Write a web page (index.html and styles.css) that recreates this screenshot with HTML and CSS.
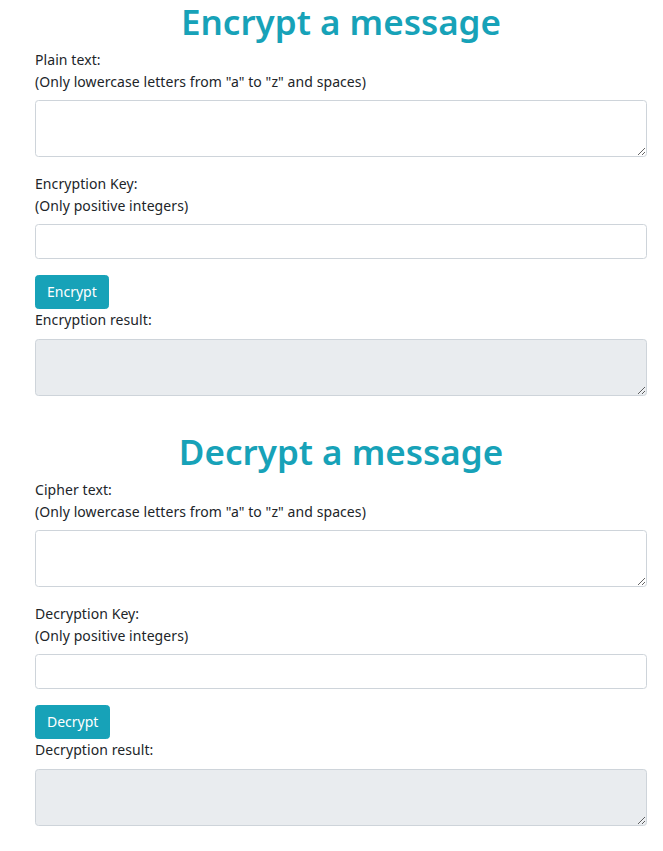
FILE: index.html
```html
<!DOCTYPE html>
<html lang="en">
<head>
<meta charset="utf-8">
<title>Caesar cipher</title>
<link rel="stylesheet" href="styles.css">
</head>
<body>
<main class="container">
  <section class="panel">
    <h1 class="title">Encrypt a message</h1>
    <div class="form-group">
      <label class="label" for="plain">Plain text:<br>(Only lowercase letters from "a" to "z" and spaces)</label>
      <textarea id="plain" class="control area"></textarea>
    </div>
    <div class="form-group">
      <label class="label" for="ekey">Encryption Key:<br>(Only positive integers)</label>
      <input id="ekey" class="control field" type="text">
    </div>
    <button class="btn" type="button">Encrypt</button>
    <div class="result">
      <label class="label" for="eres">Encryption result:</label>
      <textarea id="eres" class="control area" disabled></textarea>
    </div>
  </section>
  <section class="panel">
    <h1 class="title">Decrypt a message</h1>
    <div class="form-group">
      <label class="label" for="cipher">Cipher text:<br>(Only lowercase letters from "a" to "z" and spaces)</label>
      <textarea id="cipher" class="control area"></textarea>
    </div>
    <div class="form-group">
      <label class="label" for="dkey">Decryption Key:<br>(Only positive integers)</label>
      <input id="dkey" class="control field" type="text">
    </div>
    <button class="btn" type="button">Decrypt</button>
    <div class="result">
      <label class="label" for="dres">Decryption result:</label>
      <textarea id="dres" class="control area" disabled></textarea>
    </div>
  </section>
</main>
</body>
</html>
```
FILE: styles.css
```css
html, body {
  margin: 0;
  padding: 0;
  background: #fff;
}
body {
  font-family: "Segoe UI", "Noto Sans", "Liberation Sans", sans-serif;
  font-size: 14px;
  line-height: 21.5px;
  color: #212529;
}
.container {
  width: 612px;
  margin-left: 35px;
  display: flex;
  flex-direction: column;
  gap: 34.5px;
}
.panel {
  display: flex;
  flex-direction: column;
}
.title {
  margin: 0 0 6px;
  font-size: 35px;
  line-height: 43px;
  font-weight: 600;
  color: #17a2b8;
  text-align: center;
}
.form-group {
  display: flex;
  flex-direction: column;
  margin-bottom: 16px;
}
.label {
  display: block;
  margin-bottom: 8px;
  letter-spacing: 0.08px;
}
.control {
  box-sizing: border-box;
  width: 100%;
  margin: 0;
  border: 1px solid #ced4da;
  border-radius: 3.5px;
  background: #fff;
  font: inherit;
  color: #495057;
  padding: 5px 10.5px;
}
.area {
  height: 57px;
  resize: vertical;
  display: block;
}
.area:disabled {
  background: #e9ecef;
}
.field {
  height: 34.5px;
}
.btn {
  align-self: flex-start;
  height: 34.5px;
  padding: 0 11px;
  border: 1px solid #17a2b8;
  border-radius: 3.5px;
  background: #17a2b8;
  color: #fff;
  font: inherit;
}
.result {
  display: flex;
  flex-direction: column;
}
```
